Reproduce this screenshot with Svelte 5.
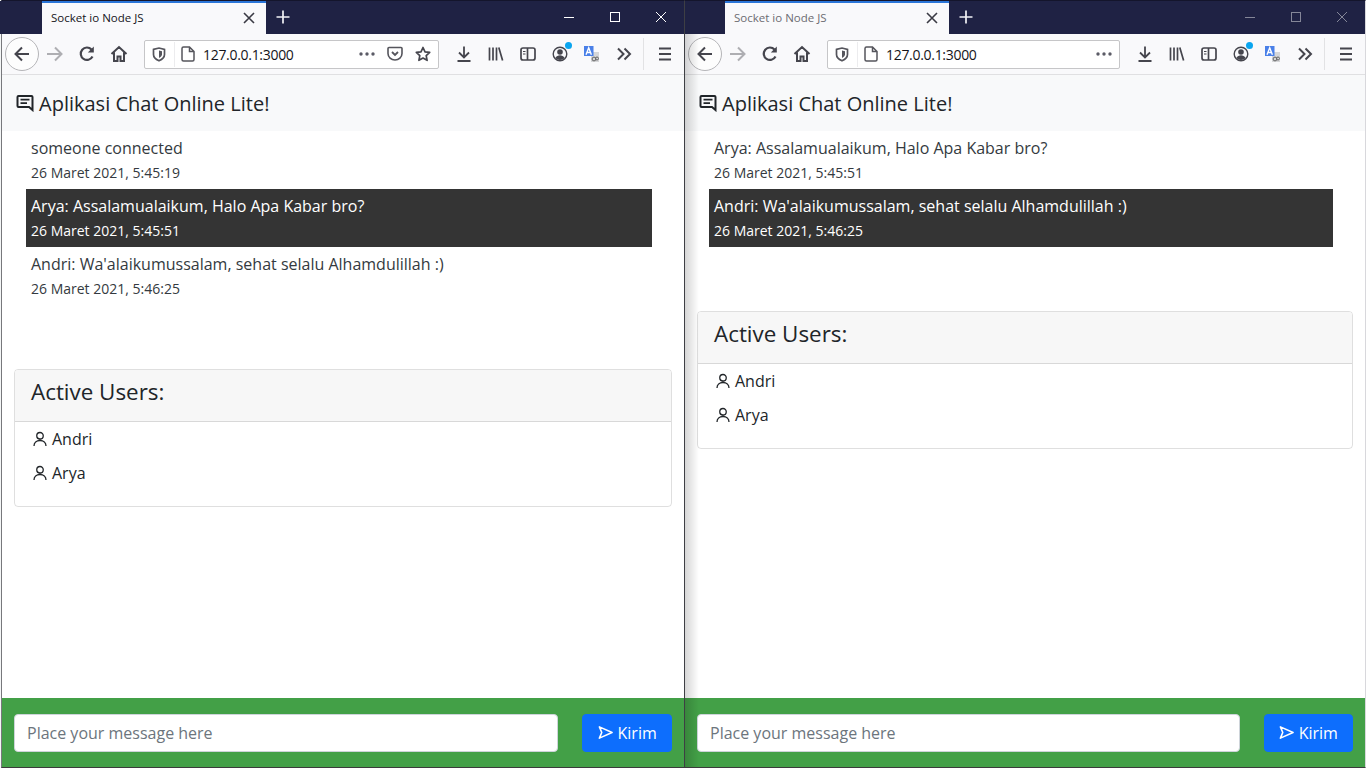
<script>
  const windows = [
    {
      id: 'a',
      dim: false,
      extras: true,
      messages: [
        { text: 'someone connected', time: '26 Maret 2021, 5:45:19', dark: false },
        { text: 'Arya: Assalamualaikum, Halo Apa Kabar bro?', time: '26 Maret 2021, 5:45:51', dark: true },
        { text: "Andri: Wa'alaikumussalam, sehat selalu Alhamdulillah :)", time: '26 Maret 2021, 5:46:25', dark: false }
      ]
    },
    {
      id: 'b',
      dim: true,
      extras: false,
      messages: [
        { text: 'Arya: Assalamualaikum, Halo Apa Kabar bro?', time: '26 Maret 2021, 5:45:51', dark: false },
        { text: "Andri: Wa'alaikumussalam, sehat selalu Alhamdulillah :)", time: '26 Maret 2021, 5:46:25', dark: true }
      ]
    }
  ];
  const users = ['Andri', 'Arya'];
</script>

<div class="desktop">
  {#each windows as w (w.id)}
    <section class="win" class:dim={w.dim} class:first={!w.dim}>
      <header class="titlebar">
        <div class="tab">
          <span class="tab-title">Socket io Node JS</span>
          <svg class="tab-x" width="16" height="16" viewBox="0 0 16 16"><path d="M3 3l10 10M13 3L3 13" stroke="#3a3a44" stroke-width="1.6" fill="none"/></svg>
        </div>
        <svg class="newtab" width="16" height="16" viewBox="0 0 16 16"><path d="M8 1.500v13M1.500 8h13" stroke="#f2f2f6" stroke-width="1.700" fill="none"/></svg>
        <div class="controls">
          <span class="ctl"><svg width="12" height="12" viewBox="0 0 12 12"><path d="M1 6.500h10" stroke="#fff" fill="none"/></svg></span>
          <span class="ctl"><svg width="12" height="12" viewBox="0 0 12 12"><rect x="1.500" y="1.500" width="9" height="9" stroke="#fff" fill="none"/></svg></span>
          <span class="ctl"><svg width="12" height="12" viewBox="0 0 12 12"><path d="M1 1l10 10M11 1L1 11" stroke="#fff" fill="none"/></svg></span>
        </div>
      </header>

      <nav class="toolbar">
        <span class="back"><svg width="18" height="18" viewBox="0 0 18 18"><path d="M16 9H2.500M9 2.500L2.500 9 9 15.500" stroke="#45454d" stroke-width="2" fill="none"/></svg></span>
        <span class="tool"><svg width="18" height="18" viewBox="0 0 18 18"><path d="M1 9h14.500M9 2.500L15.500 9 9 15.500" stroke="#aeaeb2" stroke-width="2" fill="none"/></svg></span>
        <span class="tool"><svg width="18" height="18" viewBox="0 0 18 18"><path d="M14.500 11.500A6.200 6.200 0 1 1 13.500 4.500" stroke="#45454d" stroke-width="2.200" fill="none"/><path d="M15.800 1.500v6h-6z" fill="#45454d"/></svg></span>
        <span class="tool"><svg width="18" height="18" viewBox="0 0 18 18"><path d="M1.500 9L9 2l7.500 7M4 7.500V16h3.500v-4.500h3V16H14V7.500" stroke="#45454d" stroke-width="2" fill="none"/></svg></span>

        <div class="url">
          <svg class="shield" width="14" height="15" viewBox="0 0 14 15"><path d="M1.500 2.300L7 1l5.500 1.300v5.200c0 3-2.500 5-5.500 6.300-3-1.300-5.500-3.300-5.500-6.300z" stroke="#55555c" stroke-width="1.700" fill="none"/><path d="M7 3.500l3 .8v3c0 1.800-1.500 3-3 3.800z" fill="#55555c"/></svg>
          <span class="url-sep"></span>
          <svg class="page" width="14" height="16" viewBox="0 0 14 16"><path d="M2.500 1h6l4.500 4.500v8c0 .8-.7 1.500-1.500 1.500h-9C1.700 15 1 14.300 1 13.500v-11C1 1.700 1.700 1 2.500 1zM8.500 1v4.500H13" stroke="#55555c" stroke-width="1.500" fill="none"/></svg>
          <span class="addr">127.0.0.1:3000</span>
          <svg class="dots" width="16" height="4" viewBox="0 0 16 4"><circle cx="2" cy="2" r="1.700" fill="#5b5b66"/><circle cx="8" cy="2" r="1.700" fill="#5b5b66"/><circle cx="14" cy="2" r="1.700" fill="#5b5b66"/></svg>
          {#if w.extras}
            <svg class="pocket" width="16" height="16" viewBox="0 0 16 16"><path d="M2 1.500h12c.6 0 1 .4 1 1v5c0 3.700-3.200 6.500-7 6.500s-7-2.800-7-6.500v-5c0-.6.400-1 1-1z" stroke="#55555c" stroke-width="1.600" fill="none"/><path d="M5 6l3 3 3-3" stroke="#55555c" stroke-width="1.800" fill="none"/></svg>
            <svg class="star" width="16" height="16" viewBox="0 0 16 16"><path d="M8 1.500l2 4.300 4.700.6-3.500 3.200.9 4.700L8 12l-4.100 2.300.9-4.700-3.500-3.200 4.700-.6z" stroke="#45454d" stroke-width="1.700" stroke-linejoin="round" fill="none"/></svg>
          {/if}
        </div>

        <span class="tool first-right"><svg width="16" height="16" viewBox="0 0 16 16"><path d="M8 0.500v10M3 6.500l5 5 5-5M1.500 15h13" stroke="#45454d" stroke-width="1.800" fill="none"/></svg></span>
        <span class="tool"><svg width="16" height="16" viewBox="0 0 16 16"><path d="M1.500 1.500v13M5 1.500v13M8.500 1.500v13M10.800 1.500l3.800 13" stroke="#45454d" stroke-width="1.700" fill="none"/></svg></span>
        <span class="tool"><svg width="16" height="16" viewBox="0 0 16 16"><rect x="1" y="2" width="14" height="12" rx="2" stroke="#45454d" stroke-width="1.700" fill="none"/><path d="M7.500 2v12" stroke="#45454d" stroke-width="1.700"/><path d="M3 5.500h2.500M3 8h2.500" stroke="#45454d"/></svg></span>
        <span class="tool acct">
          <svg width="16" height="16" viewBox="0 0 16 16"><circle cx="8" cy="8" r="6.800" stroke="#45454d" stroke-width="1.400" fill="none"/><circle cx="8" cy="6" r="2.800" fill="#45454d"/><path d="M3.300 12c1-2 3-2.800 4.700-2.800s3.700.8 4.700 2.800c-1.200 1.300-2.900 2-4.700 2s-3.500-.7-4.700-2z" fill="#45454d"/></svg>
          <i class="dot"></i>
        </span>
        <span class="tool">
          <svg width="16" height="16" viewBox="0 0 16 16"><rect x="7" y="6" width="8" height="10" fill="#d5d6d8"/><rect x="0" y="0" width="9.500" height="10" fill="#4a80e8"/><path d="M2 8.700L4.700 1.800l2.700 6.900M3 6.500h3.400" stroke="#fff" stroke-width="1.400" fill="none"/><circle cx="10" cy="13" r="1.900" stroke="#666" fill="none"/><circle cx="13" cy="12.500" r="1.500" stroke="#666" fill="none"/></svg>
        </span>
        <span class="tool"><svg width="16" height="16" viewBox="0 0 16 16"><path d="M2 2.500L7.500 8 2 13.500M8.500 2.500L14 8l-5.500 5.500" stroke="#45454d" stroke-width="2" fill="none"/></svg></span>
        <span class="tool-sep"></span>
        <span class="tool"><svg width="16" height="16" viewBox="0 0 16 16"><path d="M2 2.500h12M2 8h12M2 13.500h12" stroke="#45454d" stroke-width="1.800" fill="none"/></svg></span>
      </nav>

      <main class="page-area">
        <div class="brandbar">
          <svg class="brand-icon" width="18" height="18" viewBox="0 0 18 18"><path d="M2.500 2h13c.6 0 1 .4 1 1v13l-3.500-3H2.500c-.6 0-1-.4-1-1V3c0-.6.4-1 1-1z" stroke="#212529" stroke-width="2" fill="none"/><path d="M4.500 5.700h9M4.500 9.200h6.500" stroke="#212529" stroke-width="1.800" fill="none"/></svg>
          <span class="brand">Aplikasi Chat Online Lite!</span>
        </div>

        <ul class="msgs">
          {#each w.messages as m}
            <li class:dark={m.dark}>
              <div class="text">{m.text}</div>
              <div class="time">{m.time}</div>
            </li>
          {/each}
        </ul>

        <div class="card">
          <div class="card-head">Active Users:</div>
          <ul class="users">
            {#each users as u}
              <li>
                <svg width="16" height="16" viewBox="0 0 16 16"><path d="M8 8a3 3 0 1 0 0-6.500 3 3 0 0 0 0 6.500zM2 15c0-3.300 2.500-5.500 6-5.500s6 2.200 6 5.500" stroke="#212529" stroke-width="1.300" fill="none"/></svg>
                <span>{u}</span>
              </li>
            {/each}
          </ul>
        </div>

        <footer class="composer">
          <div class="col-input"><input type="text" placeholder="Place your message here" /></div>
          <div class="col-btn">
            <button type="button">
              <svg width="15" height="15" viewBox="0 0 16 16"><path d="M1.500 2L15 8 1.500 14 4 8z" stroke="#fff" stroke-width="1.700" stroke-linejoin="round" fill="none"/></svg>
              <span>Kirim</span>
            </button>
          </div>
        </footer>
      </main>

      {#if w.dim}<div class="shadow"></div>{/if}
    </section>
  {/each}
</div>

<style>
  :global(body) {
    margin: 0;
    background: #f4f6f6;
  }
  .desktop {
    display: flex;
    height: 768px;
    overflow: hidden;
    font-family: "Open Sans", "Liberation Sans", sans-serif;
    color: #212529;
  }
  .win {
    position: relative;
    display: flex;
    flex-direction: column;
    width: 681px;
    height: 768px;
    box-sizing: border-box;
    background: #fff;
    border-right: 1px solid #d8d8dc;
    border-bottom: 1px solid #3b3b3b;
    border-top: 1px solid #14152c;
  }
  .win.first {
    width: 684px;
    margin-left: 1px;
    border-left: 1px solid #77787c;
    border-right: 1px solid #3e3f44;
    flex: none;
  }
  .win.first .titlebar { box-shadow: -2px 0 0 #1f2244; }
  .titlebar {
    display: flex;
    align-items: stretch;
    height: 33px;
    background: #1f2244;
    flex: none;
  }
  .tab {
    display: flex;
    align-items: center;
    justify-content: space-between;
    width: 224px;
    box-sizing: border-box;
    margin-left: 40px;
    padding: 0 9px 2px 9px;
    background: #f9f9fb;
    border-top: 2px solid #2a75d8;
    font-size: 11.500px;
    color: #15141a;
  }
  .dim .tab-title { color: #6c6c72; }
  .tab-x { flex: none; }
  .newtab { align-self: center; margin: 0 0 2px 9px; }
  .controls {
    display: flex;
    margin-left: auto;
    padding-bottom: 2px;
  }
  .ctl {
    display: flex;
    align-items: center;
    justify-content: center;
    width: 46px;
  }
  .dim .ctl svg { opacity: .45; }
  .toolbar {
    display: flex;
    align-items: center;
    flex: none;
    height: 41px;
    box-sizing: border-box;
    padding: 0 3px 0 3px;
    background: #f9f9fb;
    border-bottom: 1px solid #e0e0e2;
  }
  .back {
    display: flex;
    align-items: center;
    justify-content: center;
    width: 32px;
    height: 32px;
    flex: none;
    border: 1px solid #b5b5b8;
    border-radius: 50%;
    background: #fdfdfd;
  }
  .tool {
    position: relative;
    display: flex;
    align-items: center;
    justify-content: center;
    width: 32px;
    height: 32px;
    flex: none;
  }
  .dot {
    position: absolute;
    top: 4px;
    right: 4px;
    width: 7px;
    height: 7px;
    border-radius: 50%;
    background: #0aa5ef;
  }
  .url {
    display: flex;
    align-items: center;
    flex: 1;
    height: 29px;
    box-sizing: border-box;
    margin: 0 9px;
    padding: 0 7px 0 7px;
    background: #fff;
    border: 1px solid #c6c6c8;
    border-radius: 2px;
  }
  .url-sep {
    width: 1px;
    height: 25px;
    margin: 0 5px 0 8px;
    background: #ececee;
  }
  .page { margin-left: 1px; }
  .addr {
    margin-left: 8px;
    font-size: 14px;
    letter-spacing: -.3px;
    color: #15141a;
  }
  .dots { margin-left: auto; }
  .pocket { margin-left: 12px; }
  .star { margin-left: 12px; }
  .tool-sep {
    width: 1px;
    height: 32px;
    margin: 0 5px 0 3px;
    background: #e2e2e4;
  }
  .page-area {
    display: flex;
    flex-direction: column;
    flex: 1;
    min-height: 0;
  }
  .brandbar {
    display: flex;
    align-items: center;
    gap: 5px;
    height: 56px;
    flex: none;
    box-sizing: border-box;
    padding-left: 14px;
    background: #f8f9fa;
  }
  .brand {
    font-size: 20px;
  }
  .msgs {
    list-style: none;
    margin: 0 32px 64px 24px;
    padding: 0;
  }
  .msgs li {
    padding: 5px 5px 4px;
    color: #343a40;
  }
  .msgs li.dark {
    background: #343434;
    color: #fff;
  }
  .text {
    font-size: 16px;
    line-height: 24px;
  }
  .time {
    margin-top: 1px;
    font-size: 14px;
    line-height: 24px;
  }
  .card {
    margin: 0 12px;
    border: 1px solid rgba(0, 0, 0, .125);
    border-radius: 4px;
  }
  .card-head {
    height: 52px;
    box-sizing: border-box;
    padding: 0 16px 8px;
    display: flex;
    align-items: center;
    font-size: 22.400px;
    background: #f7f7f7;
    border-bottom: 1px solid rgba(0, 0, 0, .125);
    border-radius: 3px 3px 0 0;
  }
  .users {
    list-style: none;
    margin: 0;
    padding: 0 0 16px 17px;
  }
  .users li {
    display: flex;
    align-items: center;
    gap: 4px;
    height: 34px;
    font-size: 16px;
  }
  .composer {
    display: flex;
    align-items: center;
    margin-top: auto;
    height: 69px;
    flex: none;
    background: #43a047;
  }
  .col-input {
    flex: 0 0 83.3333%;
    box-sizing: border-box;
    padding: 0 12px;
  }
  .col-btn {
    flex: 0 0 16.6667%;
    box-sizing: border-box;
    padding: 0 12px;
  }
  input {
    display: block;
    width: 100%;
    height: 38px;
    box-sizing: border-box;
    padding: 6px 12px;
    border: 1px solid #ced4da;
    border-radius: 4px;
    background: #fff;
    font: inherit;
    font-size: 16px;
  }
  input::placeholder { color: #6c757d; opacity: 1; }
  button {
    display: flex;
    align-items: center;
    justify-content: center;
    gap: 5px;
    width: 100%;
    height: 38px;
    border: 1px solid #0d6efd;
    border-radius: 4px;
    background: #0d6efd;
    color: #fff;
    font: inherit;
    font-size: 16px;
    padding: 0;
  }
  .shadow {
    position: absolute;
    top: 33px;
    bottom: 0;
    left: 0;
    width: 14px;
    pointer-events: none;
    background: linear-gradient(to right, rgba(0, 0, 0, .16), rgba(0, 0, 0, 0));
  }
</style>
